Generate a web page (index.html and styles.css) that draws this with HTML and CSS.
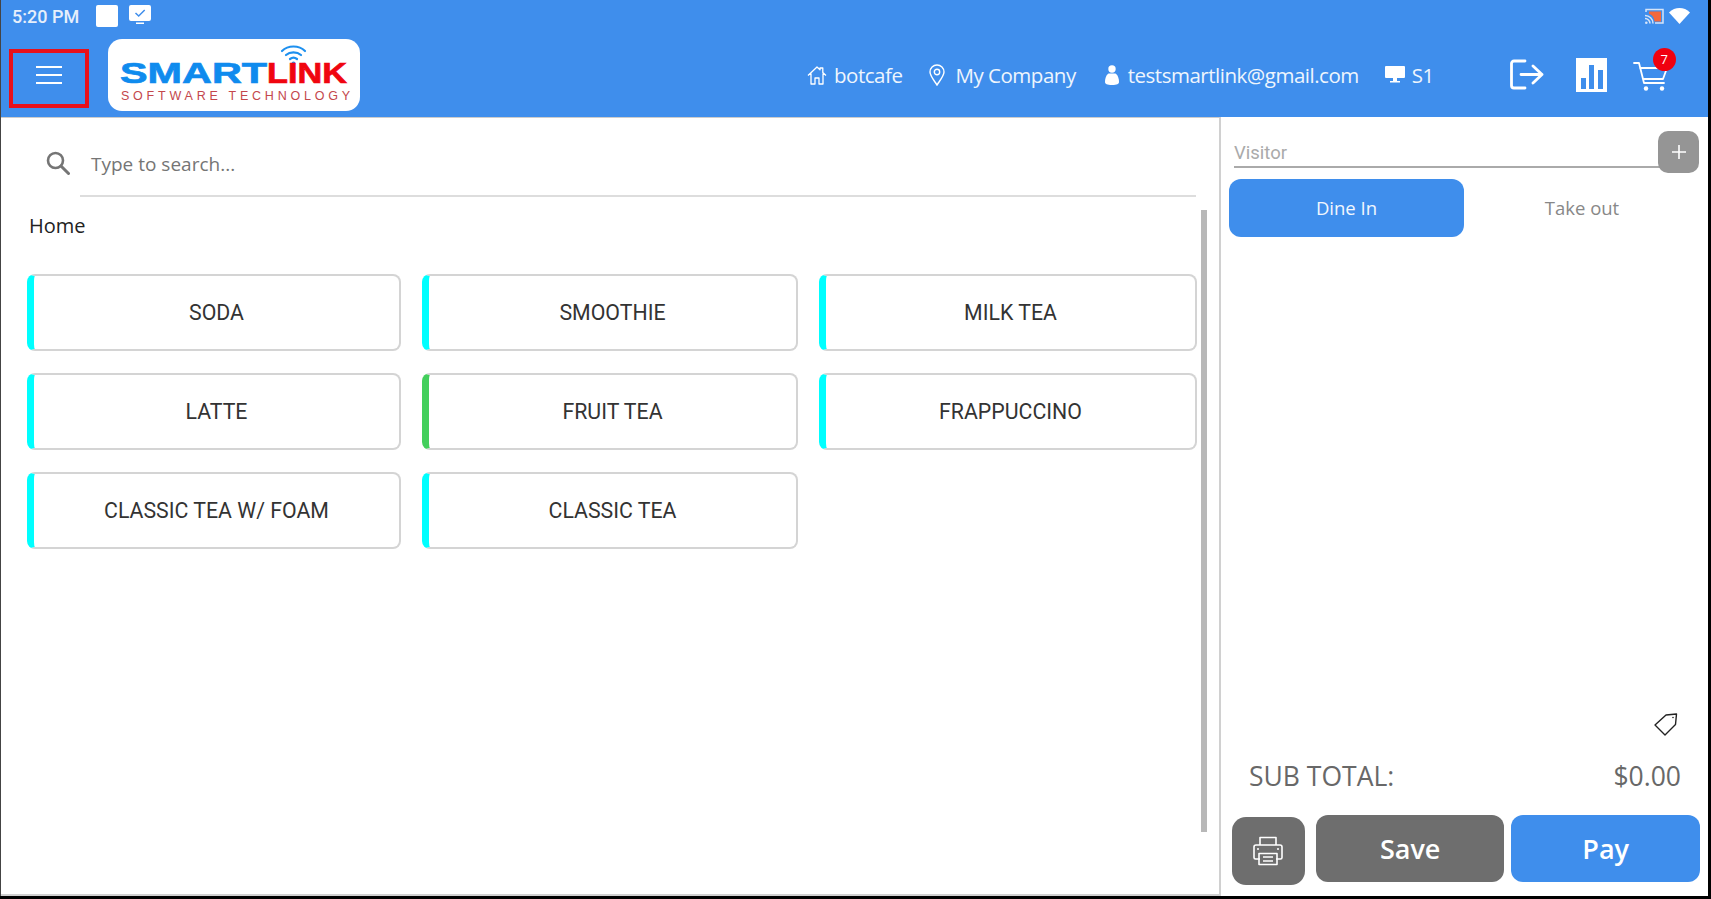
FILE: index.html
```html
<!DOCTYPE html>
<html lang="en">
<head>
<meta charset="utf-8">
<title>SmartLink POS</title>
<link rel="stylesheet" href="styles.css">
</head>
<body>
<div class="app">
  <header class="header">
    <div class="statusbar">
      <span class="clock">5:20 PM</span>
      <span class="status-square"></span>
      <svg class="status-monitor" viewBox="0 0 22 20"><path fill="#fff" d="M2 0h18a2 2 0 0 1 2 2v12a2 2 0 0 1-2 2H2a2 2 0 0 1-2-2V2a2 2 0 0 1 2-2zM7 17.500h8V19H7z"/><path fill="none" stroke="#3f8eec" stroke-width="1.500" d="M6.500 8l3.200 3 6-6"/></svg>
      <span class="status-spacer"></span>
      <svg class="status-cast" viewBox="0 0 19 16"><path fill="none" stroke="#d5e4f8" stroke-width="1.500" d="M1 4V1.500h17v13.500h-8"/><path fill="#f4683c" d="M4 3.500h12v10H9.500C9 9 7 6.500 4 6z"/><path fill="none" stroke="#d5e4f8" stroke-width="1.500" d="M0 7.500a8 8 0 0 1 8 8M0 10.500a5 5 0 0 1 5 5"/><circle cx="1.300" cy="14.700" r="1.300" fill="#d5e4f8"/></svg>
      <svg class="status-wifi" viewBox="0 0 21 16"><path fill="#fff" d="M0 4.500C6-1.400 15-1.400 21 4.500L10.500 16z"/></svg>
    </div>
    <div class="toolbar">
      <button class="menu-btn" aria-label="Menu"><span></span><span></span><span></span></button>
      <div class="logo">
        <svg viewBox="0 0 252 72" width="252" height="72">
          <g fill="none" stroke="#1e90ef" stroke-linecap="round"><path stroke-width="2.200" d="M174 12c6-6 17-6 23 0"/><path stroke-width="2.200" d="M178 16c4-3.500 11-3.500 15 0"/><path stroke-width="2.200" d="M182 20c2-1.500 5-1.500 7 0"/></g>
          <circle cx="185.500" cy="24.500" r="2" fill="#1e90ef"/>
          <text class="logo-smart" x="12" y="44" textLength="147" lengthAdjust="spacingAndGlyphs">SMART</text>
          <text class="logo-link" x="159" y="44" textLength="80" lengthAdjust="spacingAndGlyphs">LINK</text>
          <text class="logo-sub" x="13" y="61" textLength="229" lengthAdjust="spacing">SOFTWARE TECHNOLOGY</text>
        </svg>
      </div>
      <nav class="info">
        <span class="info-item info-home">
          <svg class="ico" viewBox="0 0 20 20" width="20" height="20"><path fill="none" stroke="#fff" stroke-width="1.300" stroke-linejoin="round" d="M1 10.500L10 2l3 2.800V3h2.800v4.500L19 10.500M4 8.500V19h4v-6h4v6h4V8.500"/></svg>botcafe</span>
        <span class="info-item info-company">
          <svg class="ico" viewBox="0 0 16 22" width="16" height="22"><path fill="none" stroke="#fff" stroke-width="1.400" d="M8 21C4 15 1 11.500 1 8a7 7 0 0 1 14 0c0 3.500-3 7-7 13z"/><circle cx="8" cy="8" r="2.700" fill="none" stroke="#fff" stroke-width="1.400"/></svg>My Company</span>
        <span class="info-item info-user">
          <svg class="ico" viewBox="0 0 14 20" width="14" height="20"><circle cx="7" cy="4" r="3.700" fill="#fff"/><path fill="#fff" d="M3.500 8.500h7C13 10 14 14 14 17c0 2-2 3-7 3s-7-1-7-3c0-3 1-7 3.500-8.500z"/></svg>testsmartlink@gmail.com</span>
        <span class="info-item info-station">
          <svg class="ico" viewBox="0 0 20 17" width="20" height="17"><path fill="#fff" d="M1 0h18a1 1 0 0 1 1 1v10a1 1 0 0 1-1 1H1a1 1 0 0 1-1-1V1a1 1 0 0 1 1-1zM8 12h4v3h3v1.500H5V15h3z"/></svg>S1</span>
      </nav>
      <div class="actions">
        <svg class="act-logout" viewBox="0 0 34 31" width="34" height="31"><path fill="none" stroke="#fff" stroke-width="2.800" stroke-linecap="round" stroke-linejoin="round" d="M15 2H4a2.500 2.500 0 0 0-2.500 2.500v22A2.500 2.500 0 0 0 4 29h11M11 15.500h21M23 7l9 8.500-9 8.500"/></svg>
        <svg class="act-chart" viewBox="0 0 31 34" width="31" height="34"><path fill="#fff" fill-rule="evenodd" d="M0 0h31v34H0zM5 20v11h5V20zM13 7v24h5V7zM22 12v19h5V12z"/></svg>
        <div class="cart">
          <svg viewBox="0 0 35 30" width="35" height="30"><path fill="none" stroke="#fff" stroke-width="1.800" stroke-linecap="round" stroke-linejoin="round" d="M1 2h5l5 20h20M7 7h27l-4 11H10"/><circle cx="13" cy="27.500" r="2.200" fill="#fff"/><circle cx="29" cy="27.500" r="2.200" fill="#fff"/></svg>
          <span class="badge">7</span>
        </div>
      </div>
    </div>
  </header>
  <main class="main">
    <section class="catalog">
      <div class="catalog-body">
        <div class="search">
          <svg class="search-ico" viewBox="0 0 24 24" width="24" height="24"><circle cx="9.500" cy="9.500" r="7.500" fill="none" stroke="#757575" stroke-width="2.600"/><path stroke="#757575" stroke-width="3" stroke-linecap="round" d="M15 15l7.500 7.500"/></svg>
          <div class="search-field">Type to search...</div>
        </div>
        <div class="crumb">Home</div>
        <div class="grid">
          <button class="card">SODA</button>
          <button class="card">SMOOTHIE</button>
          <button class="card">MILK TEA</button>
          <button class="card">LATTE</button>
          <button class="card card-green">FRUIT TEA</button>
          <button class="card">FRAPPUCCINO</button>
          <button class="card">CLASSIC TEA W/ FOAM</button>
          <button class="card">CLASSIC TEA</button>
        </div>
      </div>
      <div class="scrollbar"></div>
    </section>
    <aside class="order">
      <div class="visitor">
        <div class="visitor-field">Visitor</div>
        <button class="plus-btn" aria-label="Add"><svg viewBox="0 0 16 16" width="16" height="16"><path stroke="#fff" stroke-width="1.600" d="M8 1v14M1 8h14"/></svg></button>
      </div>
      <div class="tabs">
        <button class="tab tab-active">Dine In</button>
        <button class="tab">Take out</button>
      </div>
      <div class="tag-row">
        <svg viewBox="0 0 24 23" width="24" height="23"><path fill="none" stroke="#222" stroke-width="1.400" stroke-linejoin="round" d="M1 12L12 2l10.500-1-1 10.500L11 22z"/><circle cx="19" cy="4.500" r=".8" fill="#222"/></svg>
      </div>
      <div class="total"><span>SUB TOTAL:</span><span>$0.00</span></div>
      <div class="buttons">
        <button class="print-btn" aria-label="Print"><svg viewBox="0 0 30 30" width="30" height="30"><g fill="none" stroke="#fff" stroke-width="1.600" stroke-linejoin="round"><path d="M7 9V1.500h16V9M7 23H2.500A1.500 1.500 0 0 1 1 21.500V11a2 2 0 0 1 2-2h24a2 2 0 0 1 2 2v10.500a1.500 1.500 0 0 1-1.500 1.500H23"/><path d="M6 17.500h18V28.500H6zM10 21h10M10 25h10"/></g><circle cx="5" cy="13" r="1" fill="#fff"/><circle cx="25" cy="13" r="1" fill="#fff"/></svg></button>
        <button class="big-btn btn-save">Save</button>
        <button class="big-btn btn-pay">Pay</button>
      </div>
    </aside>
  </main>
</div>
</body>
</html>
```
FILE: styles.css
```css
* { box-sizing: border-box; }
html, body { margin: 0; height: 100%; background: #000; overflow: hidden; }
body { font-family: "Open Sans", sans-serif; }
button { font-family: inherit; border: 0; padding: 0; cursor: pointer; background: none; }

.app { width: 1708px; height: 896px; background: #fff; border-left: 1px solid #444; display: flex; flex-direction: column; }

.header { height: 117px; background: #3f8eec; flex: none; }
.statusbar { height: 32px; display: flex; align-items: center; padding-left: 11px; padding-right: 18px; }
.clock { font-family: Roboto, sans-serif; font-size: 18px; color: #e6effb; font-weight: 500; width: 84px; }
.status-square { width: 22px; height: 22px; background: #fff; border-radius: 2px; }
.status-monitor { width: 22px; height: 20px; margin-left: 11px; margin-top: -2px; }
.status-spacer { flex: 1; }
.status-cast { width: 19px; height: 16px; margin-right: 5px; }
.status-wifi { width: 21px; height: 16px; }

.toolbar { height: 85px; display: flex; align-items: center; padding-left: 8px; }
.menu-btn { width: 80px; height: 59px; border: 4px solid #e8101a; padding-bottom: 8px; display: flex; flex-direction: column; align-items: center; justify-content: center; gap: 6px; margin-top: 8px; }
.menu-btn span { display: block; width: 26px; height: 2px; background: #fff; }
.logo { width: 252px; height: 72px; background: #fff; border-radius: 14px; margin-left: 19px; margin-top: 1px; }
.logo svg { display: block; }
.logo-smart, .logo-link { font-family: "Liberation Sans", sans-serif; font-weight: 700; font-size: 30px; stroke-width: .7px; }
.logo-smart { fill: #0f8bee; stroke: #0f8bee; }
.logo-link { fill: #f0050f; stroke: #f0050f; }
.logo-sub { font-family: "Liberation Sans", sans-serif; font-size: 12.500px; fill: #c4474c; }

.info { display: flex; align-items: center; margin-left: 447px; margin-top: 0; font-size: 20.500px; letter-spacing: -0.480px; color: #eef5fd; }
.info-item { display: flex; align-items: center; white-space: nowrap; }
.info-home .ico { margin-right: 7px; }
.info-company { margin-left: 27px; }
.info-company .ico { margin-right: 10px; }
.info-user { margin-left: 29px; }
.info-user .ico { margin-right: 9px; }
.info-station { margin-left: 26px; }
.info-station .ico { margin-right: 7px; }

.actions { display: flex; align-items: center; margin-left: 76px; margin-top: 0; }
.act-chart { margin-left: 32px; }
.cart { position: relative; width: 35px; height: 30px; margin-left: 26px; margin-top: 3px; }
.cart svg { display: block; }
.badge { position: absolute; left: 20px; top: -13px; width: 23px; height: 23px; border-radius: 50%; background: #f0000f; color: #fff; font-size: 13px; line-height: 23px; text-align: center; }

.main { flex: 1; display: flex; min-height: 0; }
.catalog { width: 1220px; flex: none; border-top: 1px solid #ccc; border-right: 2px solid #d0d0d0; border-bottom: 2px solid #d0d0d0; display: flex; }
.catalog-body { width: 1197px; flex: none; padding-left: 26px; }
.search { height: 79px; display: flex; align-items: flex-start; margin-left: 19px; margin-right: 2px; }
.search-ico { flex: none; margin-top: 33px; }
.search-field { flex: 1; height: 79px; margin-left: 10px; padding-left: 11px; padding-top: 32px; border-bottom: 2px solid #ddd; font-size: 19px; line-height: 28px; color: #757575; }
.crumb { font-size: 20px; line-height: 28px; color: #222; margin-top: 15px; margin-left: 2px; }
.grid { display: grid; grid-template-columns: 374px 376px 378px; grid-auto-rows: 77px; column-gap: 21px; row-gap: 22px; margin-top: 34px; }
.card { background: #fff; border: 2px solid #d4d4d4; border-left: 7px solid #00ffff; border-radius: 8px; font-family: Roboto, sans-serif; font-size: 21.300px; color: #333; }
.card-green { border-left-color: #43cf5c; }
.scrollbar { width: 6px; height: 622px; background: #b8b8b8; margin-top: 92px; margin-left: 3px; }

.order { flex: 1; display: flex; flex-direction: column; padding: 15px 8px 11px 8px; min-width: 0; }
.visitor { display: flex; height: 42px; margin-left: 5px; margin-right: 1px; margin-top: -1px; }
.visitor-field { flex: 1; height: 37px; border-bottom: 2px solid #aaa; font-family: Roboto, sans-serif; font-size: 18.500px; line-height: 44px; color: #aaa; }
.plus-btn { width: 41px; height: 42px; margin-left: -2px; background: #959595; border-radius: 10px; display: flex; align-items: center; justify-content: center; }
.tabs { display: grid; grid-template-columns: 235px 236px; margin-top: 6px; }
.tab { height: 58px; padding-bottom: 2px; border-radius: 12px; font-size: 18.500px; color: #888; }
.tab-active { background: #3f8eec; color: #f2f7fe; }
.tag-row { margin-top: auto; display: flex; justify-content: flex-end; padding-right: 22px; }
.tag-row svg { display: block; }
.total { display: flex; justify-content: space-between; margin-top: 22px; padding-left: 20px; padding-right: 19px; font-size: 26.500px; font-weight: 500; line-height: 36px; color: #686868; }
.buttons { display: flex; align-items: flex-start; margin-top: 21px; padding-left: 3px; }
.print-btn { width: 73px; height: 68px; margin-top: 2px; background: #6e6e6e; border-radius: 14px; display: flex; align-items: center; justify-content: center; }
.big-btn { width: 189px; height: 67px; border-radius: 12px; color: #fff; font-size: 27px; font-weight: 600; }
.btn-save { margin-left: 11px; background: #6e6e6e; }
.btn-pay { margin-left: 7px; background: #3f8eec; }
```
